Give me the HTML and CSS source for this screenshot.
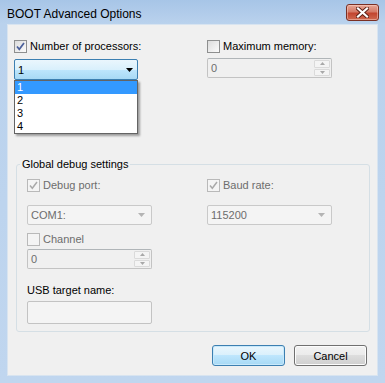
FILE: index.html
```html
<!DOCTYPE html>
<html lang="en">
<head>
    <meta charset="UTF-8">
    <meta name="viewport" content="width=device-width, initial-scale=1.0">
    <title>BOOT Advanced Options</title>
    <link rel="stylesheet" href="styles.css">
</head>
<body>
    <div class="window">
        <!-- Title bar -->
        <div class="titlebar">
            <span class="title">BOOT Advanced Options</span>
            <button class="close-button">
                <svg width="13" height="11" viewBox="0 0 13 11">
                    <path d="M2 1.5 L11 9.5 M11 1.5 L2 9.5" stroke="#5b2015" stroke-width="4" stroke-linecap="square"/>
                    <path d="M2 1.5 L11 9.5 M11 1.5 L2 9.5" stroke="#ffffff" stroke-width="2.2" stroke-linecap="square"/>
                </svg>
            </button>
        </div>

        <div class="client">
            <div class="top-row">
                <div class="col">
                    <div class="check">
                        <span class="check-box checked">
                            <svg width="11" height="11" viewBox="0 0 11 11"><path d="M2 5.5 L4.3 8.3 L9 2" fill="none" stroke="#4a5f9a" stroke-width="1.7"/></svg>
                        </span>
                        Number of processors:
                    </div>
                    <div class="combo combo-open">
                        <span>1</span>
                        <svg class="combo-arrow" width="7" height="4" viewBox="0 0 7 4"><polygon points="0,0 7,0 3.5,4" fill="#000"/></svg>

                        <!-- open list -->
                        <div class="dropdown-list">
                            <div class="dropdown-item selected">1</div>
                            <div class="dropdown-item">2</div>
                            <div class="dropdown-item">3</div>
                            <div class="dropdown-item">4</div>
                        </div>
                    </div>
                </div>
                <div class="col">
                    <div class="check">
                        <span class="check-box"></span>
                        Maximum memory:
                    </div>
                    <div class="spinner spinner-memory">
                        <span>0</span>
                        <span class="spin-buttons">
                            <span class="spin-up"><svg width="5" height="3" viewBox="0 0 5 3"><polygon points="0,3 5,3 2.5,0" fill="#a8a8a8"/></svg></span>
                            <span class="spin-down"><svg width="5" height="3" viewBox="0 0 5 3"><polygon points="0,0 5,0 2.5,3" fill="#a8a8a8"/></svg></span>
                        </span>
                    </div>
                </div>
            </div>

            <fieldset class="group">
                <legend>Global debug settings</legend>
                <div class="group-row">
                    <div class="col">
                        <div class="check disabled">
                            <span class="check-box checked">
                                <svg width="11" height="11" viewBox="0 0 11 11"><path d="M2 5.5 L4.3 8.3 L9 2" fill="none" stroke="#a9a9a9" stroke-width="1.5"/></svg>
                            </span>
                            Debug port:
                        </div>
                        <div class="combo">
                            <span>COM1:</span>
                            <svg class="combo-arrow" width="7" height="4" viewBox="0 0 7 4"><polygon points="0,0 7,0 3.5,4" fill="#b4b4b4"/></svg>
                        </div>
                    </div>
                    <div class="col">
                        <div class="check disabled">
                            <span class="check-box checked">
                                <svg width="11" height="11" viewBox="0 0 11 11"><path d="M2 5.5 L4.3 8.3 L9 2" fill="none" stroke="#a9a9a9" stroke-width="1.5"/></svg>
                            </span>
                            Baud rate:
                        </div>
                        <div class="combo">
                            <span>115200</span>
                            <svg class="combo-arrow" width="7" height="4" viewBox="0 0 7 4"><polygon points="0,0 7,0 3.5,4" fill="#b4b4b4"/></svg>
                        </div>
                    </div>
                </div>

                <div class="check disabled channel-check">
                    <span class="check-box"></span>
                    Channel
                </div>
                <div class="spinner spinner-channel">
                    <span>0</span>
                    <span class="spin-buttons">
                        <span class="spin-up"><svg width="5" height="3" viewBox="0 0 5 3"><polygon points="0,3 5,3 2.5,0" fill="#a8a8a8"/></svg></span>
                        <span class="spin-down"><svg width="5" height="3" viewBox="0 0 5 3"><polygon points="0,0 5,0 2.5,3" fill="#a8a8a8"/></svg></span>
                    </span>
                </div>

                <div class="field-label">USB target name:</div>
                <div class="text-input"></div>
            </fieldset>

            <div class="buttons">
                <button class="dialog-button ok-button">OK</button>
                <button class="dialog-button">Cancel</button>
            </div>
        </div>
    </div>
</body>
</html>
```

FILE: styles.css
```css
body {
    margin: 0;
    font-family: 'Liberation Sans', Arial, sans-serif;
    font-size: 11px;
    color: #000000;
}

.window {
    width: 385px;
    height: 383px;
    box-sizing: border-box;
    padding: 0 8px 8px 8px;
    background: linear-gradient(#a7c5e7, #bad2ed 24px, #c0d6ef);
}

/* title bar */
.titlebar {
    height: 25px;
    display: flex;
    align-items: flex-start;
    justify-content: space-between;
    margin: 0 -2px 0 -1px;
}

.title {
    font-size: 12px;
    line-height: 14px;
    margin-top: 7px;
    color: #000000;
}

.close-button {
    width: 33px;
    height: 17px;
    margin-top: 4px;
    padding: 0;
    border: 1px solid #7a3024;
    border-radius: 3px;
    background: linear-gradient(#e8a796, #d47a67 45%, #c2452f 55%, #cf6a50);
    display: flex;
    align-items: center;
    justify-content: center;
    box-shadow: inset 0 0 0 1px rgba(255, 220, 210, 0.45);
}

/* client area */
.client {
    height: 350px;
    background-color: #f0f0f0;
    box-shadow: 0 0 0 1px #d8e4f0;
    padding-top: 15px;
    box-sizing: border-box;
}

.top-row {
    display: grid;
    grid-template-columns: 193px 1fr;
    padding-left: 6px;
}

.col {
    position: relative;
}

.check {
    display: flex;
    align-items: center;
    gap: 3px;
    height: 13px;
    line-height: 13px;
    white-space: nowrap;
}

.check.disabled {
    color: #6d6d6d;
}

.check-box {
    width: 13px;
    height: 13px;
    box-sizing: border-box;
    border: 1px solid #8e8f8f;
    background: linear-gradient(135deg, #dcdcdc, #fbfbfb);
    display: flex;
    align-items: center;
    justify-content: center;
    flex-shrink: 0;
}

.check.disabled .check-box {
    border-color: #b9b9b9;
    background: #f4f4f4;
}

/* combos */
.combo {
    position: relative;
    width: 125px;
    height: 20px;
    margin-top: 13px;
    box-sizing: border-box;
    border: 1px solid #c9c9c9;
    border-radius: 2px;
    background-color: #f4f4f4;
    color: #6d6d6d;
    display: flex;
    align-items: center;
    padding-left: 3px;
}

.combo-arrow {
    position: absolute;
    right: 6px;
    top: 7px;
}

.combo-open {
    width: 124px;
    height: 21px;
    margin-top: 6px;
    border-color: #3c7fb1;
    background: linear-gradient(#eaf6fd, #d9f0fc 50%, #bee6fd 50%, #a7d9f5);
    color: #000000;
}

.combo-open .combo-arrow {
    right: 4px;
    top: 8px;
}

.dropdown-list {
    position: absolute;
    left: -1px;
    top: 20px;
    width: 124px;
    box-sizing: border-box;
    border: 1px solid #646464;
    background-color: #ffffff;
    box-shadow: 2px 2px 2px rgba(0, 0, 0, 0.35);
    color: #000000;
    z-index: 2;
}

.dropdown-item {
    height: 13px;
    line-height: 13px;
    padding-left: 2px;
}

.dropdown-item.selected {
    background-color: #3399ff;
    color: #ffffff;
}

/* spinners */
.spinner {
    position: relative;
    width: 125px;
    height: 20px;
    box-sizing: border-box;
    border: 1px solid #c3c3c3;
    border-top-color: #b0b5b8;
    border-radius: 2px;
    background-color: #f0f0f0;
    color: #6d6d6d;
    display: flex;
    align-items: center;
    padding-left: 3px;
}

.spinner-memory {
    margin-top: 5px;
}

.spinner-channel {
    margin-top: 3px;
}

.spin-buttons {
    position: absolute;
    right: 1px;
    top: 1px;
    bottom: 1px;
    width: 16px;
    display: flex;
    flex-direction: column;
    gap: 1px;
}

.spin-up,
.spin-down {
    flex: 1;
    border: 1px solid #dadada;
    border-radius: 1px;
    background-color: #f4f4f4;
    display: flex;
    align-items: center;
    justify-content: center;
}

/* group box */
.group {
    margin: 77px 7px 0 8px;
    padding: 8px 10px 7px 10px;
    border: 1px solid #d5dfe5;
    border-radius: 3px;
    min-width: 0;
}

.group legend {
    margin-left: -7px;
    padding: 0 2px;
    line-height: 14px;
}

.group-row {
    display: grid;
    grid-template-columns: 180px 1fr;
}

.channel-check {
    margin-top: 8px;
}

.field-label {
    margin-top: 15px;
    height: 13px;
    line-height: 13px;
}

.text-input {
    width: 125px;
    height: 23px;
    margin-top: 4px;
    box-sizing: border-box;
    border: 1px solid #c3c3c3;
    border-radius: 2px;
    background-color: #f4f4f4;
}

/* dialog buttons */
.buttons {
    display: flex;
    justify-content: flex-end;
    gap: 9px;
    margin-top: 13px;
    padding-right: 10px;
}

.dialog-button {
    width: 73px;
    height: 21px;
    padding: 0;
    font-family: 'Liberation Sans', Arial, sans-serif;
    font-size: 11px;
    color: #000000;
    border: 1px solid #707070;
    border-radius: 3px;
    background: linear-gradient(#f2f2f2, #ebebeb 50%, #dddddd 50%, #cfcfcf);
    box-shadow: inset 0 0 0 1px #fcfcfc;
}

.ok-button {
    border-color: #3c7fb1;
    background: linear-gradient(#eaf6fd, #d9f0fc 50%, #bee6fd 50%, #a7d9f5);
    box-shadow: inset 0 0 0 1px #c8e9fb;
}
```
